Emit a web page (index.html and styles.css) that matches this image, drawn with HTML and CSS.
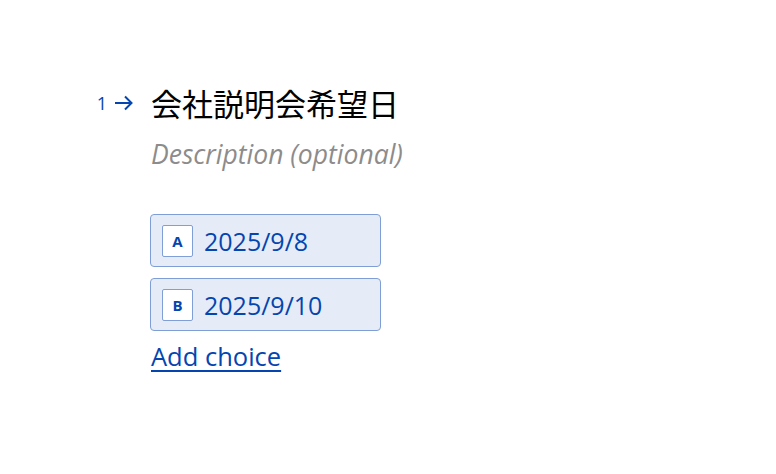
FILE: index.html
```html
<!DOCTYPE html>
<html lang="ja">
<head>
<meta charset="utf-8">
<link rel="stylesheet" href="styles.css">
</head>
<body>
<main class="page">
  <section class="question">
    <div class="qnum">
      <span class="num">1</span>
      <svg class="arrow" width="20" height="16" viewBox="0 0 20 16"><path d="M1 8h16.5M11 1.5 17.5 8 11 14.5" fill="none" stroke="#0445AF" stroke-width="2"/></svg>
    </div>
    <div class="qbody">
      <h1 class="title">会社説明会希望日</h1>
      <p class="desc">Description (optional)</p>
      <ul class="choices">
        <li class="choice"><span class="key">A</span><span class="label">2025/9/8</span></li>
        <li class="choice"><span class="key">B</span><span class="label">2025/9/10</span></li>
      </ul>
      <a class="add" href="#">Add choice</a>
    </div>
  </section>
</main>
</body>
</html>
```
FILE: styles.css
```css
html, body {
  margin: 0;
  padding: 0;
  background: #fff;
}
body {
  font-family: "Open Sans", "Noto Sans", "Noto Sans CJK JP", sans-serif;
  color: #000;
}
.page {
  padding: 82px 0 0 0;
}
.question {
  display: flex;
  align-items: flex-start;
}
.qnum {
  width: 151px;
  box-sizing: border-box;
  padding: 11px 17px 0 0;
  display: flex;
  justify-content: flex-end;
  align-items: center;
  gap: 7px;
  color: #0445AF;
}
.num {
  font-size: 18px;
  line-height: 20px;
}
.arrow {
  display: block;
}
.qbody {
  display: flex;
  flex-direction: column;
  align-items: flex-start;
}
.title {
  margin: 0;
  font-family: "Noto Sans CJK JP", sans-serif;
  font-weight: 400;
  font-size: 31px;
  line-height: 42px;
}
.desc {
  margin: 13px 0 0 0;
  font-style: italic;
  font-size: 26.5px;
  line-height: 34px;
  color: #8c8c8c;
}
.choices {
  list-style: none;
  margin: 43px 0 0 -1px;
  padding: 0;
  display: flex;
  flex-direction: column;
  gap: 11px;
}
.choice {
  box-sizing: border-box;
  width: 231px;
  height: 53px;
  border: 1px solid #7F9ED5;
  border-radius: 4px;
  background: #E6ECF7;
  display: flex;
  align-items: center;
  padding: 0 0 0 11px;
  gap: 11px;
}
.key {
  box-sizing: border-box;
  width: 31px;
  height: 32px;
  border: 1px solid #809FD6;
  border-radius: 2px;
  background: #fff;
  color: #0445AF;
  font-weight: 700;
  font-size: 15px;
  display: flex;
  align-items: center;
  justify-content: center;
}
.label {
  color: #0445AF;
  font-size: 25px;
  line-height: 32px;
}
.add {
  margin-top: 9px;
  color: #0445AF;
  font-size: 25.5px;
  line-height: 32px;
  text-decoration: underline;
  text-underline-offset: 4px;
}
```
